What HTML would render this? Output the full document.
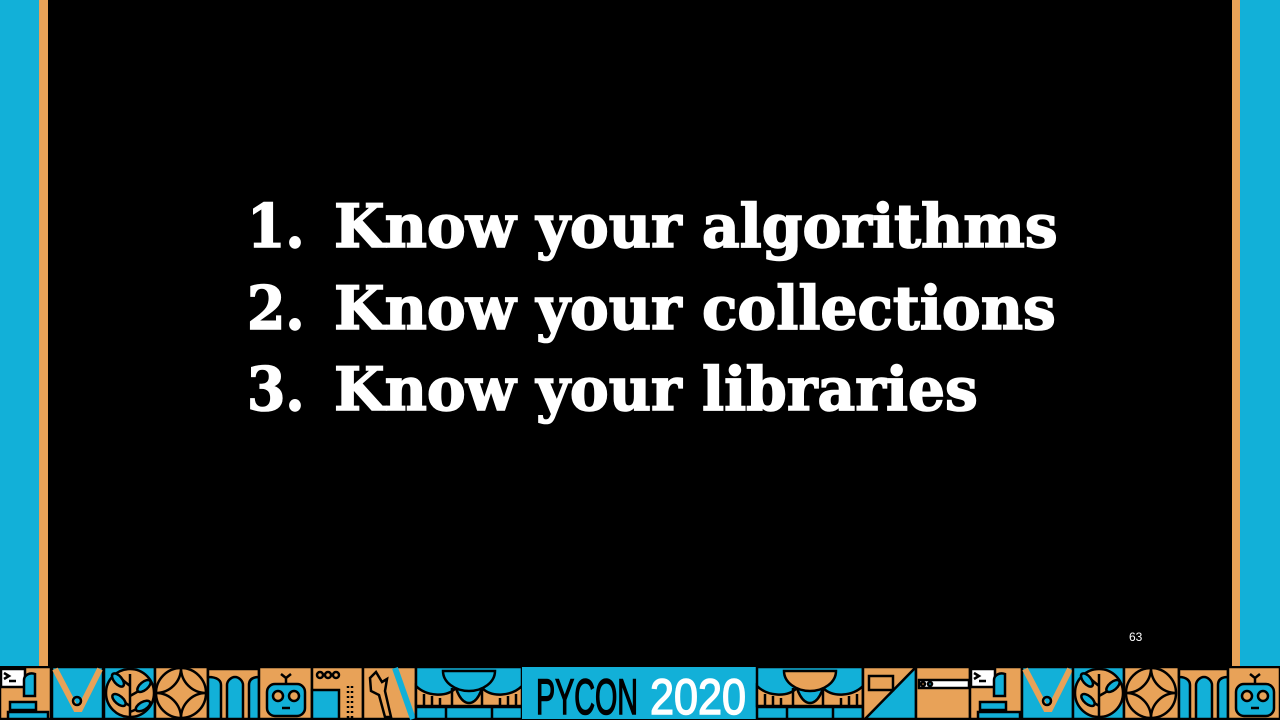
<!DOCTYPE html>
<html><head><meta charset="utf-8"><style>
html,body{margin:0;padding:0;background:#000;}
#s{position:relative;width:1280px;height:720px;overflow:hidden;background:#000;}
.l{position:absolute;left:0;top:0;width:39px;height:666px;background:#12B0D8;}
.lo{position:absolute;left:39px;top:0;width:9px;height:666px;background:#E8A258;}
.r{position:absolute;left:1240px;top:0;width:40px;height:666px;background:#12B0D8;}
.ro{position:absolute;left:1232px;top:0;width:8px;height:666px;background:#E8A258;}
.t{position:absolute;color:#fff;font-family:"DejaVu Serif","Liberation Serif",serif;font-weight:bold;font-size:60px;line-height:1;white-space:nowrap;transform-origin:0 0;-webkit-text-stroke:1.6px #fff;}
.n{position:absolute;left:1129px;top:630px;color:#fff;font-family:"Liberation Sans",sans-serif;font-size:12px;}
svg{position:absolute;left:0;top:666px;}
</style></head><body><div id="s">
<div class="l"></div><div class="lo"></div><div class="ro"></div><div class="r"></div>
<div class="t" style="left:247px;top:197px;transform:scaleX(0.92)">1.</div>
<div class="t" style="left:247px;top:279px;transform:scaleX(0.92)">2.</div>
<div class="t" style="left:247px;top:360px;transform:scaleX(0.92)">3.</div>
<div class="t" style="left:334px;top:197px;transform:scaleX(0.97)">Know your algorithms</div>
<div class="t" style="left:334px;top:279px;transform:scaleX(0.97)">Know your collections</div>
<div class="t" style="left:334px;top:360px;transform:scaleX(0.97)">Know your libraries</div>
<div class="n">63</div>
<svg width="1280" height="54" viewBox="0 0 1280 54">
<rect width="1280" height="54" fill="#000"/>
<g stroke="#000" stroke-width="2.5" fill="none">
<rect x="0" y="1" width="51" height="52" fill="#E8A258"/>
<rect x="1" y="3" width="24" height="18" fill="#fff"/>
<path d="M4 7l5 3-5 3M9 15h7"/>
<path d="M24 14c0-5 6-8 11-6v22H24z" fill="#12B0D8"/>
<path d="M10 36h26v8H10zM8 46h40v7H8z" fill="#12B0D8"/>
<rect x="52" y="1" width="51" height="52" fill="#12B0D8"/>
<path d="M55 3l21 40h4l20-40" stroke="#E8A258" stroke-width="6"/>
<circle cx="77" cy="35" r="4"/>
<rect x="104" y="1" width="51" height="52" fill="#12B0D8"/>
<circle cx="130" cy="27" r="24" fill="#E8A258"/>
<path d="M130 52V8M130 20l-12-10M130 30l14-8M130 40l-12-8M130 46l14-6"/>
<ellipse cx="118" cy="14" rx="4" ry="8" fill="#12B0D8" transform="rotate(-40 118 14)"/>
<ellipse cx="144" cy="20" rx="4" ry="8" fill="#12B0D8" transform="rotate(50 144 20)"/>
<ellipse cx="119" cy="34" rx="4" ry="8" fill="#12B0D8" transform="rotate(-50 119 34)"/>
<ellipse cx="143" cy="40" rx="4" ry="8" fill="#12B0D8" transform="rotate(60 143 40)"/>
<rect x="155" y="1" width="53" height="52" fill="#E8A258"/>
<circle cx="181" cy="27" r="25"/>
<path d="M156 27a25 25 0 0 0 25-25 25 25 0 0 0 25 25 25 25 0 0 0-25 25 25 25 0 0 0-25-25z"/>
<rect x="208" y="1" width="51" height="52" fill="#12B0D8"/>
<path d="M208 3h51v8c-8 0-10 4-10 8v34h-6V19c0-4-4-8-8-8s-8 4-8 8v34h-6V19c0-4-3-8-13-8z" fill="#E8A258"/>
<rect x="259" y="1" width="53" height="52" fill="#E8A258"/>
<rect x="267" y="18" width="38" height="32" rx="8" fill="#12B0D8"/>
<circle cx="278" cy="30" r="5" fill="#E8A258"/><circle cx="294" cy="30" r="5" fill="#E8A258"/>
<path d="M282 42h8M286 18v-6M281 8l5 4 5-4"/>
<rect x="312" y="1" width="51" height="52" fill="#E8A258"/>
<circle cx="320" cy="9" r="3"/><circle cx="328" cy="9" r="3"/><circle cx="336" cy="9" r="3"/>
<rect x="312" y="24" width="27" height="29" fill="#12B0D8"/>
<path d="M348 20v33M352 20v33" stroke-dasharray="2 3"/>
<rect x="363" y="1" width="53" height="52" fill="#E8A258"/>
<path d="M370 12l6-6 6 10 5-3-2 12 6 26h-6l-6-22-8-4z" fill="#E8A258"/>
<path d="M395 2l18 51" stroke="#12B0D8" stroke-width="6"/>
<rect x="416" y="1" width="106" height="52" fill="#12B0D8"/>
<path d="M416 20c10 10 30 12 40 2 0 0 4 15 13 15s13-15 13-15c10 10 30 8 40-2v20H416z" fill="#E8A258"/>
<path d="M443 5a26 20 0 0 0 52 0z" fill="#12B0D8"/>
<path d="M452 22v18M482 22v18M424 28v12M432 30v10M440 32v8M500 32v8M508 30v10M516 28v12"/>
<path d="M416 41h106M446 41v12M492 41v12"/>
<rect x="522" y="1" width="235" height="52" fill="#12B0D8" stroke="none"/>
</g>
<text x="536" y="48" font-family="Liberation Sans Narrow,Liberation Sans,sans-serif" font-size="50" fill="#000" stroke="#000" stroke-width="1.5" textLength="102" lengthAdjust="spacingAndGlyphs">PYCON</text>
<text x="650" y="48" font-family="Liberation Sans Narrow,Liberation Sans,sans-serif" font-size="50" fill="#fff" stroke="#fff" stroke-width="1.5" textLength="96" lengthAdjust="spacingAndGlyphs">2020</text>
<g stroke="#000" stroke-width="2.5" fill="none">
<rect x="757" y="1" width="106" height="52" fill="#12B0D8"/>
<path d="M757 20c10 10 30 12 40 2 0 0 4 15 13 15s13-15 13-15c10 10 30 8 40-2v20H757z" fill="#E8A258"/>
<path d="M784 5a26 20 0 0 0 52 0z" fill="#E8A258"/>
<path d="M793 22v18M823 22v18M765 28v12M773 30v10M781 32v8M841 32v8M849 30v10M857 28v12"/>
<path d="M757 41h106M787 41v12M833 41v12"/>
<rect x="863" y="1" width="53" height="52" fill="#12B0D8"/>
<path d="M863 1h53L865 53h-2z" fill="#E8A258"/>
<rect x="869" y="10" width="24" height="14" fill="#E8A258"/>
<rect x="916" y="1" width="54" height="52" fill="#E8A258"/>
<rect x="919" y="14" width="50" height="8" fill="#fff"/>
<circle cx="923" cy="18" r="2" fill="#E8A258"/><circle cx="930" cy="18" r="2" fill="#12B0D8"/>
<rect x="970" y="1" width="52" height="52" fill="#E8A258"/>
<rect x="971" y="3" width="24" height="18" fill="#fff"/>
<path d="M974 7l5 3-5 3M979 15h7"/>
<path d="M994 14c0-5 6-8 11-6v22h-11z" fill="#12B0D8"/>
<path d="M980 36h26v8h-26zM978 46h42v7h-42z" fill="#12B0D8"/>
<rect x="1022" y="1" width="51" height="52" fill="#12B0D8"/>
<path d="M1025 3l21 40h4l20-40" stroke="#E8A258" stroke-width="6"/>
<circle cx="1047" cy="35" r="4"/>
<rect x="1073" y="1" width="51" height="52" fill="#12B0D8"/>
<circle cx="1099" cy="27" r="24" fill="#E8A258"/>
<path d="M1099 52V8M1099 20l-12-10M1099 30l14-8M1099 40l-12-8"/>
<ellipse cx="1087" cy="14" rx="4" ry="8" fill="#12B0D8" transform="rotate(-40 1087 14)"/>
<ellipse cx="1113" cy="20" rx="4" ry="8" fill="#12B0D8" transform="rotate(50 1113 20)"/>
<ellipse cx="1088" cy="34" rx="4" ry="8" fill="#12B0D8" transform="rotate(-50 1088 34)"/>
<rect x="1124" y="1" width="55" height="52" fill="#E8A258"/>
<circle cx="1151" cy="27" r="25"/>
<path d="M1126 27a25 25 0 0 0 25-25 25 25 0 0 0 25 25 25 25 0 0 0-25 25 25 25 0 0 0-25-25z"/>
<rect x="1179" y="1" width="49" height="52" fill="#12B0D8"/>
<path d="M1179 3h49v8c-8 0-10 4-10 8v34h-6V19c0-4-4-8-8-8s-8 4-8 8v34h-6V19c0-4-3-8-11-8z" fill="#E8A258"/>
<rect x="1228" y="1" width="52" height="52" fill="#E8A258"/>
<rect x="1236" y="18" width="38" height="32" rx="8" fill="#12B0D8"/>
<circle cx="1247" cy="30" r="5" fill="#E8A258"/><circle cx="1263" cy="30" r="5" fill="#E8A258"/>
<path d="M1251 42h8M1255 18v-6M1250 8l5 4 5-4"/>
</g>
</svg>
</div></body></html>
